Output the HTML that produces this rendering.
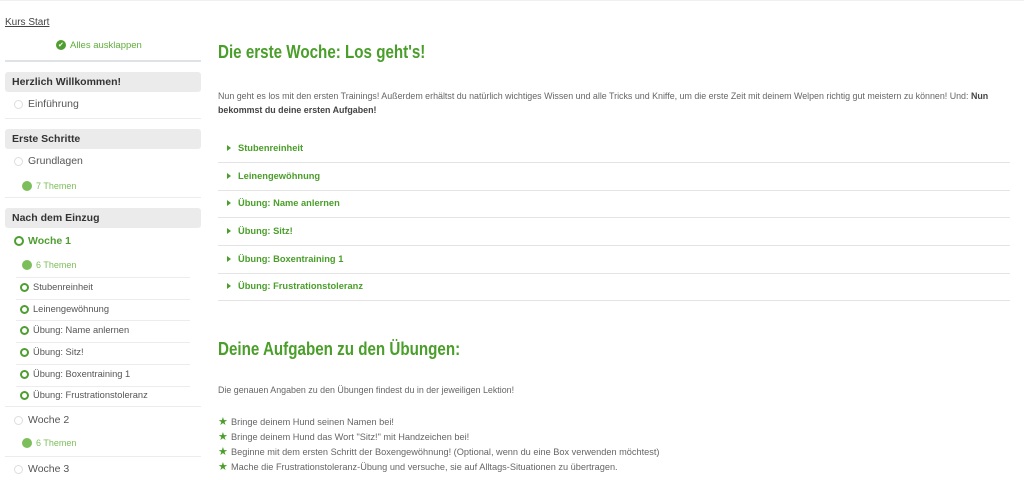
<!DOCTYPE html>
<html><head><meta charset="utf-8"><style>
*{margin:0;padding:0;box-sizing:border-box}
body{width:1024px;height:480px;background:#fff;font-family:"Liberation Sans",sans-serif;position:relative;overflow:hidden}
.a{position:absolute;white-space:nowrap}
.hdr{position:absolute;left:5px;width:196px;height:20px;background:#ebebeb;border-radius:3px;font-size:10.5px;font-weight:bold;color:#333;padding:4px 7px;line-height:12px}
.ln{position:absolute;height:1px;background:#ececec}
.sb{font-size:10.5px;color:#555}
.circ{position:absolute;width:9px;height:9px;border-radius:50%;border:1px solid #ddd}
.gc{position:absolute;width:9px;height:9px;border-radius:50%;border:2px solid #4f9e31}
.dot{position:absolute;width:10px;height:10px;border-radius:50%;background:#7cbf5a}
.th{font-size:9px;color:#7cbf5a}
.sub{font-size:9.3px;color:#555}
.acc{position:absolute;left:218px;width:792px;height:28px;border-bottom:1px solid #e4e4e4}
.acc span{position:absolute;left:20px;top:8px;font-size:9.3px;font-weight:bold;color:#4a9e2a}
.acc i{position:absolute;left:9px;top:10px;width:0;height:0;border-left:4px solid #4a9e2a;border-top:3px solid transparent;border-bottom:3px solid transparent}
h1{position:absolute;left:218px;font-size:18.5px;color:#4a9e2a;font-weight:bold;white-space:nowrap;transform:scaleX(0.82);transform-origin:left}
.p{font-size:8.9px;color:#666}
.st{position:absolute;left:218px;font-size:11px;color:#4a9e2a}
</style></head><body>
<div class="ln" style="left:0;top:0;width:1024px;background:#f0f0f0"></div>
<div class="a" style="left:5px;top:17px;font-size:10px;color:#444;text-decoration:underline">Kurs Start</div>
<div class="a" style="left:56px;top:40px;width:10px;height:10px;border-radius:50%;background:#4f9e31"></div>
<div class="a" style="left:58px;top:41px;font-size:7px;color:#fff">✔</div>
<div class="a" style="left:70px;top:40px;font-size:9.5px;color:#5fae3c">Alles ausklappen</div>
<div class="a" style="left:5px;top:60px;width:196px;height:2px;background:#dfe3e6"></div>

<div class="hdr" style="top:72px">Herzlich Willkommen!</div>
<div class="circ" style="left:14px;top:100px"></div>
<div class="a sb" style="left:28px;top:98px">Einführung</div>
<div class="ln" style="left:5px;top:118px;width:196px"></div>

<div class="hdr" style="top:129px">Erste Schritte</div>
<div class="circ" style="left:14px;top:157px"></div>
<div class="a sb" style="left:28px;top:155px">Grundlagen</div>
<div class="dot" style="left:22px;top:181px"></div>
<div class="a th" style="left:36px;top:181px">7 Themen</div>
<div class="ln" style="left:5px;top:197px;width:196px"></div>

<div class="hdr" style="top:208px">Nach dem Einzug</div>
<div class="gc" style="left:14px;top:236px;width:10px;height:10px"></div>
<div class="a" style="left:28px;top:235px;font-size:10.5px;font-weight:bold;color:#4f9e31">Woche 1</div>
<div class="dot" style="left:22px;top:260px"></div>
<div class="a th" style="left:36px;top:260px">6 Themen</div>
<div class="ln" style="left:16px;top:277px;width:174px"></div>
<div class="gc" style="left:20px;top:283px"></div><div class="a sub" style="left:33px;top:282px">Stubenreinheit</div>
<div class="ln" style="left:16px;top:299px;width:174px"></div>
<div class="gc" style="left:20px;top:305px"></div><div class="a sub" style="left:33px;top:304px">Leinengewöhnung</div>
<div class="ln" style="left:16px;top:320px;width:174px"></div>
<div class="gc" style="left:20px;top:326px"></div><div class="a sub" style="left:33px;top:325px">Übung: Name anlernen</div>
<div class="ln" style="left:16px;top:342px;width:174px"></div>
<div class="gc" style="left:20px;top:348px"></div><div class="a sub" style="left:33px;top:347px">Übung: Sitz!</div>
<div class="ln" style="left:16px;top:364px;width:174px"></div>
<div class="gc" style="left:20px;top:370px"></div><div class="a sub" style="left:33px;top:369px">Übung: Boxentraining 1</div>
<div class="ln" style="left:16px;top:386px;width:174px"></div>
<div class="gc" style="left:20px;top:391px"></div><div class="a sub" style="left:33px;top:390px">Übung: Frustrationstoleranz</div>
<div class="ln" style="left:5px;top:406px;width:196px"></div>
<div class="circ" style="left:14px;top:416px"></div>
<div class="a sb" style="left:28px;top:414px">Woche 2</div>
<div class="dot" style="left:22px;top:438px"></div>
<div class="a th" style="left:36px;top:438px">6 Themen</div>
<div class="ln" style="left:5px;top:456px;width:196px"></div>
<div class="circ" style="left:14px;top:465px"></div>
<div class="a sb" style="left:28px;top:463px">Woche 3</div>

<h1 style="top:41px">Die erste Woche: Los geht's!</h1>
<div class="a p" style="left:218px;top:91px">Nun geht es los mit den ersten Trainings! Außerdem erhältst du natürlich wichtiges Wissen und alle Tricks und Kniffe, um die erste Zeit mit deinem Welpen richtig gut meistern zu können! Und: <b style="color:#444">Nun</b></div>
<div class="a p" style="left:218px;top:105px"><b style="color:#444">bekommst du deine ersten Aufgaben!</b></div>
<div class="acc" style="top:135px"><i></i><span>Stubenreinheit</span></div>
<div class="acc" style="top:163px"><i></i><span>Leinengewöhnung</span></div>
<div class="acc" style="top:190px"><i></i><span>Übung: Name anlernen</span></div>
<div class="acc" style="top:218px"><i></i><span>Übung: Sitz!</span></div>
<div class="acc" style="top:246px"><i></i><span>Übung: Boxentraining 1</span></div>
<div class="acc" style="top:273px"><i></i><span>Übung: Frustrationstoleranz</span></div>

<h1 style="top:338px">Deine Aufgaben zu den Übungen:</h1>
<div class="a p" style="left:218px;top:385px">Die genauen Angaben zu den Übungen findest du in der jeweiligen Lektion!</div>
<div class="st" style="top:415px">★</div><div class="a p" style="left:231px;top:417px;font-size:9.2px">Bringe deinem Hund seinen Namen bei!</div>
<div class="st" style="top:430px">★</div><div class="a p" style="left:231px;top:432px;font-size:9.2px">Bringe deinem Hund das Wort "Sitz!" mit Handzeichen bei!</div>
<div class="st" style="top:445px">★</div><div class="a p" style="left:231px;top:447px;font-size:9.2px">Beginne mit dem ersten Schritt der Boxengewöhnung! (Optional, wenn du eine Box verwenden möchtest)</div>
<div class="st" style="top:460px">★</div><div class="a p" style="left:231px;top:462px;font-size:9.2px">Mache die Frustrationstoleranz-Übung und versuche, sie auf Alltags-Situationen zu übertragen.</div>
</body></html>
